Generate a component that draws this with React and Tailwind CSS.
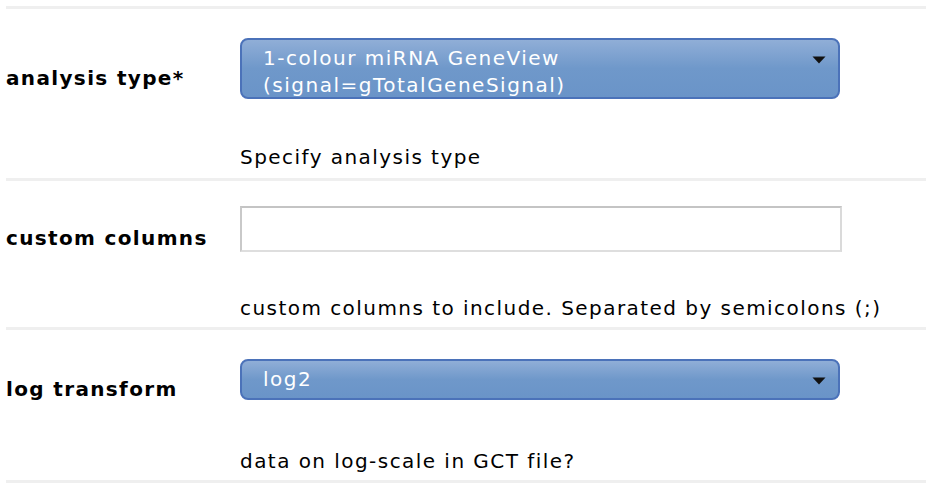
const Separator = () => <div className="ml-[6px] h-[3px] bg-[#efefef]" />;

const SelectBox = ({ lines, height }) => (
  <div
    className={`relative w-[600px] ${height} rounded-[8px] border-2 border-[#4b72b9] bg-gradient-to-b from-[#90aed7] via-[#6f98ca] to-[#6a94c8] pl-[21px] pr-12 pt-[5px] text-white leading-[27px] tracking-[1.5px]`}
  >
    {lines.map((l) => (
      <div key={l}>{l}</div>
    ))}
    <svg className="absolute right-[12px] top-[15px]" width="14" height="9" viewBox="0 0 14 9">
      <path d="M0.5 1.5 H13.5 L7 8.5 Z" fill="#111" />
    </svg>
  </div>
);

const Row = ({ label, control, help, top, gap, bottom }) => (
  <div className="flex">
    <div className="flex w-[240px] shrink-0 items-center pb-8 pl-[6px] font-bold tracking-[1.35px]">{label}</div>
    <div className={`flex flex-col ${top} ${bottom}`}>
      {control}
      <div className={`${gap} leading-[24px] tracking-[1.45px]`}>{help}</div>
    </div>
  </div>
);

export default function App() {
  return (
    <div className="min-h-[488px] bg-white pt-[6px] text-[20px] text-black" style={{ fontFamily: '"DejaVu Sans", Verdana, sans-serif' }}>
      <Separator />
      <Row
        label="analysis type*"
        top="pt-[29px]"
        gap="mt-[46px]"
        bottom="pb-[9px]"
        control={<SelectBox height="h-[61px]" lines={['1-colour miRNA GeneView', '(signal=gTotalGeneSignal)']} />}
        help="Specify analysis type"
      />
      <Separator />
      <Row
        label="custom columns"
        top="pt-[25px]"
        gap="mt-[44px]"
        bottom="pb-[7px]"
        control={
          <input
            type="text"
            className="h-[46px] w-[602px] border-2 border-t-[#c4c4c4] border-l-[#c9c9c9] border-b-[#dedede] border-r-[#dadada] bg-white outline-none"
          />
        }
        help="custom columns to include. Separated by semicolons (;)"
      />
      <Separator />
      <Row
        label="log transform"
        top="pt-[29px]"
        gap="mt-[49px]"
        bottom="pb-[7px]"
        control={<SelectBox height="h-[41px]" lines={['log2']} />}
        help="data on log-scale in GCT file?"
      />
      <Separator />
    </div>
  );
}
